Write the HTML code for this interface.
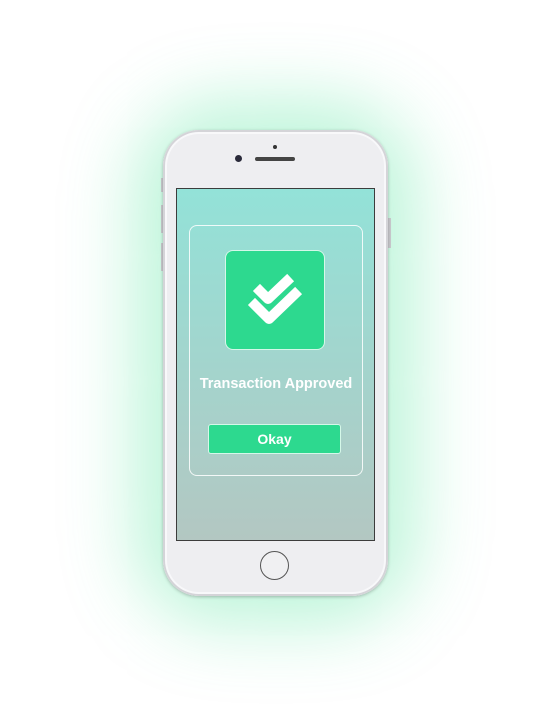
<!DOCTYPE html>
<html><head><style>
body{margin:0;width:553px;height:713px;overflow:hidden;background:#fff;position:relative;font-family:"Liberation Sans",sans-serif}
.glow{position:absolute;left:163px;top:130px;width:225px;height:466px;border-radius:60px;box-shadow:0 0 70px 30px rgba(70,225,150,.35)}
.phone{position:absolute;left:163px;top:130px;width:225px;height:466px;border-radius:36px;background:#eeeef1;box-shadow:inset 0 0 0 2px #d4d4d8,inset 0 0 0 4px #f8f8fa,0 1px 3px rgba(0,0,0,.25)}
.btn{position:absolute;background:#c8c8cc;width:3px}
.screen{position:absolute;left:176px;top:188px;width:197px;height:351px;border:1px solid #3c3c3c;background:linear-gradient(#93e2d8,#b3c7c2)}
.card{position:absolute;left:189px;top:225px;width:172px;height:249px;border:1px solid rgba(255,255,255,.85);border-radius:8px}
.icon{position:absolute;left:225px;top:250px;width:98px;height:98px;border-radius:8px;background:#2dd98f;border:1px solid rgba(255,255,255,.8)}
.title{position:absolute;left:186px;width:180px;top:376px;text-align:center;color:#fff;font-weight:bold;font-size:14.5px}
.ok{position:absolute;left:208px;top:424px;width:131px;height:28px;border-radius:3px;background:#2dd98f;border:1px solid rgba(255,255,255,.8);color:#fff;font-weight:bold;font-size:14px;text-align:center;line-height:28px}
</style></head><body>
<div class="glow"></div>
<div class="btn" style="left:161px;top:178px;height:14px"></div>
<div class="btn" style="left:161px;top:205px;height:28px"></div>
<div class="btn" style="left:161px;top:243px;height:28px"></div>
<div class="btn" style="left:388px;top:218px;height:30px"></div>
<div class="phone"></div>
<div style="position:absolute;left:235px;top:155px;width:7px;height:7px;border-radius:50%;background:#2a2a3a"></div>
<div style="position:absolute;left:255px;top:157px;width:40px;height:4px;border-radius:2px;background:#444"></div>
<div style="position:absolute;left:273px;top:145px;width:4px;height:4px;border-radius:50%;background:#333"></div>
<div class="screen"></div>
<div class="card"></div>
<div class="icon"></div>
<svg style="position:absolute;left:0;top:0" width="553" height="713">
<path d="M260 291 L268 299 L287 281" fill="none" stroke="#fff" stroke-width="10" stroke-linecap="square" stroke-linejoin="round"/>
<path d="M255 305 L269 319 L295 294" fill="none" stroke="#2dd98f" stroke-width="16" stroke-linecap="square" stroke-linejoin="round"/>
<path d="M255 305 L269 319 L295 294" fill="none" stroke="#fff" stroke-width="10" stroke-linecap="square" stroke-linejoin="round"/>
</svg>
<div class="title">Transaction Approved</div>
<div class="ok">Okay</div>
<div style="position:absolute;left:260px;top:551px;width:29px;height:29px;border-radius:50%;border:1.5px solid #555;background:#f0f0f2;box-sizing:border-box"></div>
</body></html>
